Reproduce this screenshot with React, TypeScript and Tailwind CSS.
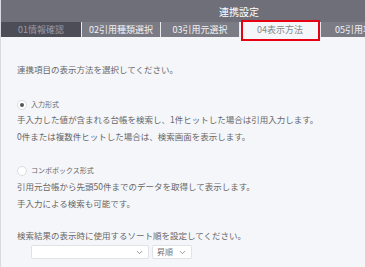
import { ChevronDown } from "lucide-react"

const tabs = [
  { label: "01情報確認", w: "w-[80px]", kind: "done" },
  { label: "02引用種類選択", w: "w-[78px]", kind: "todo" },
  { label: "03引用元選択", w: "w-[78px]", kind: "todo" },
  { label: "04表示方法", w: "w-[80px]", kind: "active" },
  { label: "05引用項目設定", w: "w-[92px]", kind: "todo" },
]

function Radio({ checked, label }: { checked?: boolean; label: string }) {
  return (
    <div className="flex items-center h-[13px]">
      <span className="w-[10px] h-[10px] rounded-full bg-white border border-[#dcdde2] flex items-center justify-center">
        {checked && <span className="w-[4px] h-[4px] rounded-full bg-[#555]" />}
      </span>
      <span className="ml-[4px] text-[7px] text-[#666]">{label}</span>
    </div>
  )
}

export default function App() {
  return (
    <div className="w-[365px] h-[267px] overflow-hidden bg-[#f5f6fa] font-['Noto_Sans_CJK_JP',sans-serif] border-l border-[#d9dadf]">
      <div className="h-[22px] bg-[#6f6f79] flex items-center pl-[218px] text-[10px] text-white">連携設定</div>

      <div className="h-[15px] bg-[#e9eaee] flex gap-px whitespace-nowrap">
        {tabs.map((t) => (
          <div
            key={t.label}
            className={
              "relative shrink-0 flex items-center justify-center text-[9px] " +
              t.w +
              (t.kind === "done"
                ? " bg-[#4d4d57] text-[#9c9ca8]"
                : t.kind === "active"
                ? " bg-[#f5f6fa] text-[#888]"
                : " bg-[#7b7b85] text-[#f2f2f4]")
            }
          >
            {t.label}
            {t.kind === "active" && (
              <span className="absolute left-[1px] right-0 -top-[2px] -bottom-[4px] border-2 border-[#e60012]" />
            )}
          </div>
        ))}
      </div>

      <div className="pl-[16px] text-[8.5px] text-[#676767]">
        <p className="mt-[26px] leading-[13px]">連携項目の表示方法を選択してください。</p>

        <div className="mt-[22px]">
          <Radio checked label="入力形式" />
          <p className="leading-[17px]">
            手入力した値が含まれる台帳を検索し、1件ヒットした場合は引用入力します。
            <br />
            0件または複数件ヒットした場合は、検索画面を表示します。
          </p>
        </div>

        <div className="mt-[19px]">
          <Radio label="コンボボックス形式" />
          <p className="mt-[1px] leading-[17px]">
            引用元台帳から先頭50件までのデータを取得して表示します。
            <br />
            手入力による検索も可能です。
          </p>
        </div>

        <p className="mt-[17px] leading-[13px]">検索結果の表示時に使用するソート順を設定してください。</p>

        <div className="mt-[3px] ml-[14px] flex gap-[3px]">
          <div className="w-[118px] h-[14px] bg-white border border-[#e1e2e6] rounded-[2px] flex items-center justify-end pr-[4px]">
            <ChevronDown className="w-[9px] h-[9px] text-[#777]" strokeWidth={2} />
          </div>
          <div className="w-[40px] h-[14px] bg-white border border-[#e1e2e6] rounded-[2px] flex items-center justify-between px-[4px]">
            <span className="text-[8px] text-[#777]">昇順</span>
            <ChevronDown className="w-[9px] h-[9px] text-[#777]" strokeWidth={2} />
          </div>
        </div>
      </div>
    </div>
  )
}
